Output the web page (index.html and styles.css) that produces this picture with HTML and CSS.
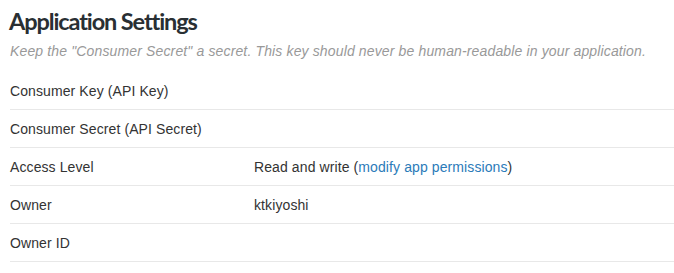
FILE: index.html
```html
<!DOCTYPE html>
<html>
<head>
<meta charset="utf-8">
<link rel="stylesheet" href="styles.css">
</head>
<body>
<div class="settings">
  <h1 class="title">Application Settings</h1>
  <p class="note">Keep the "Consumer Secret" a secret. This key should never be human-readable in your application.</p>
  <div class="rows">
    <div class="row"><span class="label">Consumer Key (API Key)</span><span class="value"></span></div>
    <div class="row"><span class="label">Consumer Secret (API Secret)</span><span class="value"></span></div>
    <div class="row"><span class="label">Access Level</span><span class="value">Read and write (<a class="link" href="#">modify app permissions</a>)</span></div>
    <div class="row"><span class="label">Owner</span><span class="value">ktkiyoshi</span></div>
    <div class="row"><span class="label">Owner ID</span><span class="value"></span></div>
  </div>
</div>
</body>
</html>
```

FILE: styles.css
```css
html, body {
  margin: 0;
  padding: 0;
  background: #fff;
}
.settings {
  padding: 6px 0 0 10px;
  font-family: "Liberation Sans", Arial, sans-serif;
  color: #333;
}
.title {
  margin: 0 0 0 -1px;
  font-family: Lato, "Liberation Sans", sans-serif;
  font-weight: 700;
  font-size: 23.5px;
  line-height: 30px;
  letter-spacing: -1.1px;
  color: #292f33;
}
.note {
  margin: 5px 0 0;
  font-size: 14px;
  line-height: 20px;
  font-style: italic;
  letter-spacing: 0.14px;
  color: #999;
}
.rows {
  margin-top: 11px;
}
.row {
  display: grid;
  grid-template-columns: 244px 1fr;
  align-items: center;
  height: 37px;
  border-bottom: 1px solid #e8e8e8;
  font-size: 14px;
  line-height: 20px;
  letter-spacing: 0.1px;
}
.link {
  color: #2b7bb9;
  text-decoration: none;
}
```
